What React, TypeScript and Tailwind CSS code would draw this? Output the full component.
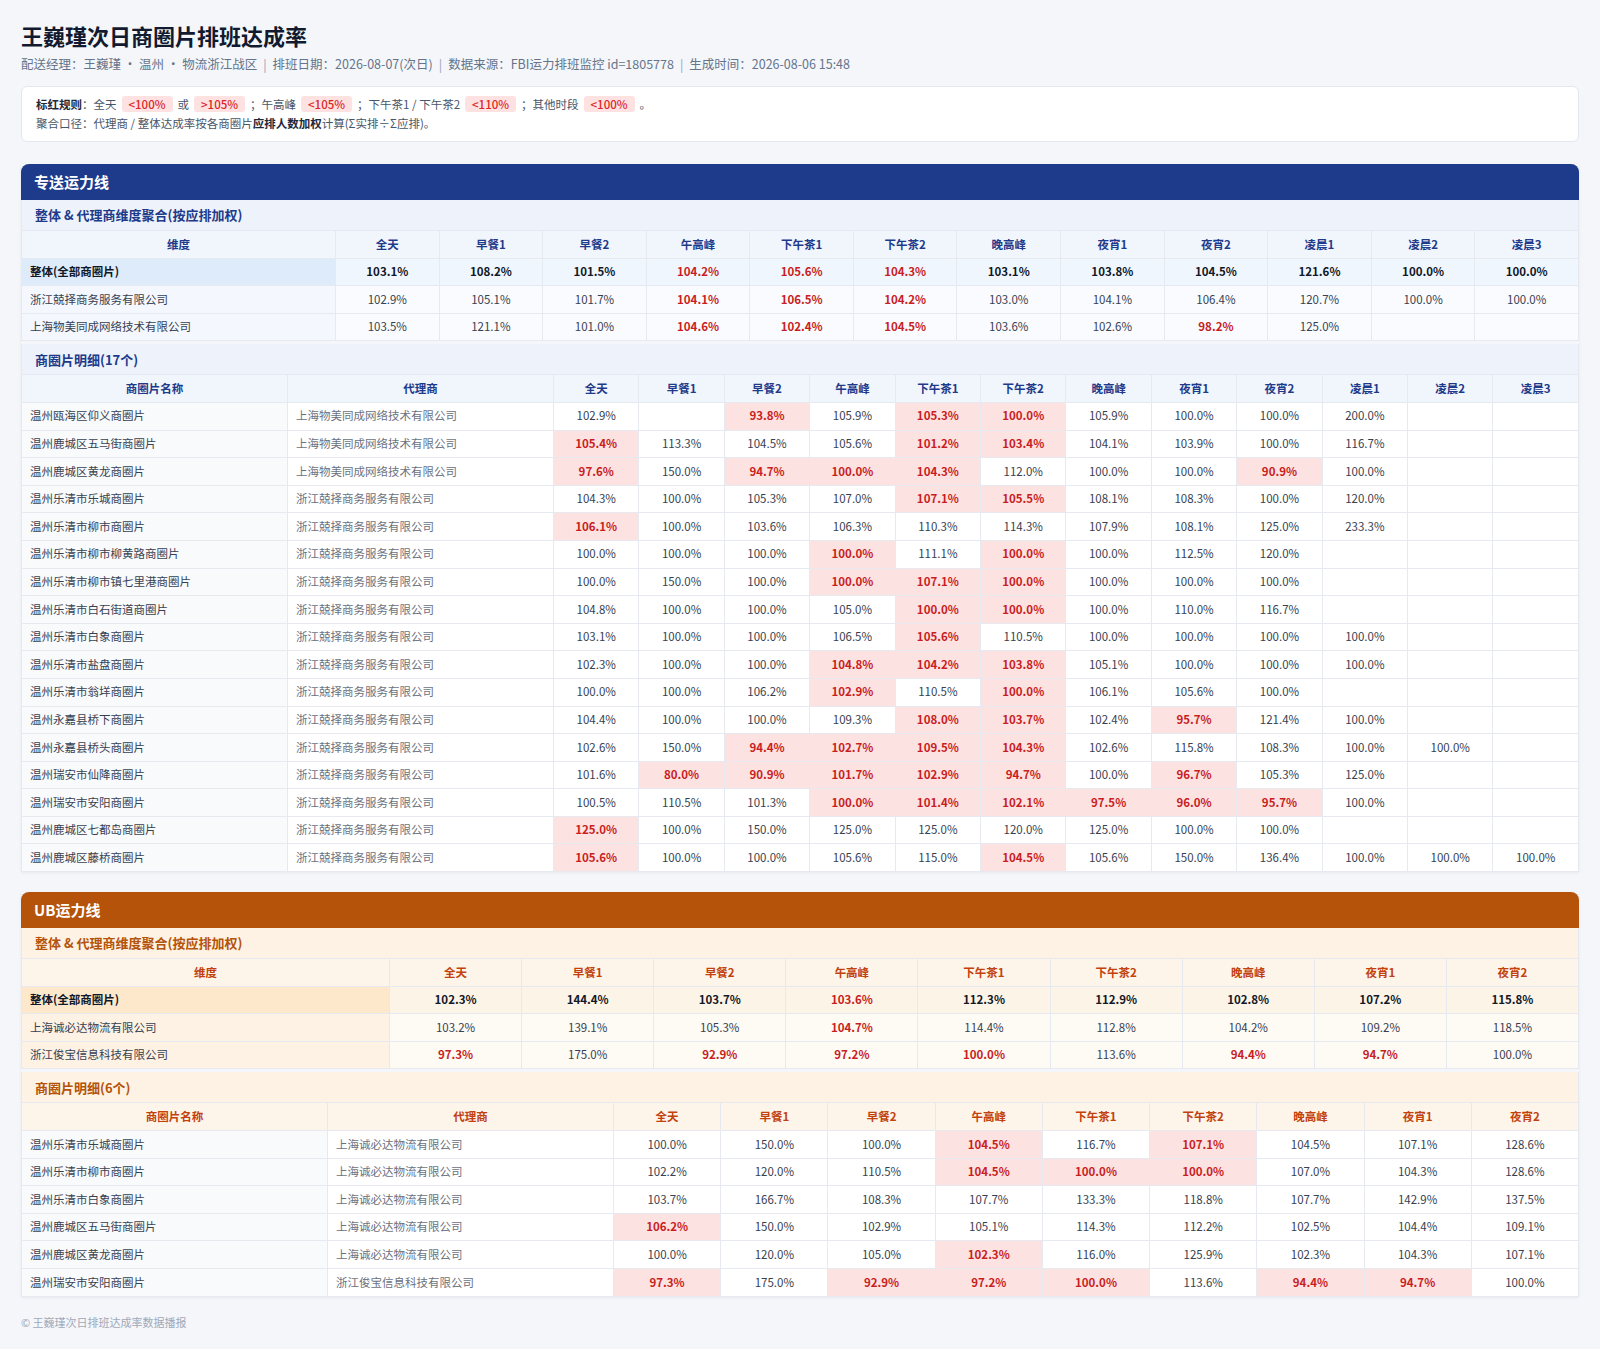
import { Fragment } from "react";

type Val = number | null;
const _ = null;

const ZS_SLOTS = ["全天", "早餐1", "早餐2", "午高峰", "下午茶1", "下午茶2", "晚高峰", "夜宵1", "夜宵2", "凌晨1", "凌晨2", "凌晨3"];
const UB_SLOTS = ZS_SLOTS.slice(0, 9);

// 标红规则
function isRed(slot: string, v: Val) {
  if (v == null) return false;
  if (slot === "全天") return v < 100 || v > 105;
  if (slot === "午高峰") return v < 105;
  if (slot === "下午茶1" || slot === "下午茶2") return v < 110;
  return v < 100;
}

const fmt = (v: Val) => (v == null ? "" : `${v.toFixed(1)}%`);

interface AggRow {
  name: string;
  values: Val[];
}
interface DetailRow {
  name: string;
  agent: string;
  values: Val[];
}

const ZS_AGG: AggRow[] = [
  { name: "整体(全部商圈片)", values: [103.1, 108.2, 101.5, 104.2, 105.6, 104.3, 103.1, 103.8, 104.5, 121.6, 100.0, 100.0] },
  { name: "浙江兢择商务服务有限公司", values: [102.9, 105.1, 101.7, 104.1, 106.5, 104.2, 103.0, 104.1, 106.4, 120.7, 100.0, 100.0] },
  { name: "上海物美同成网络技术有限公司", values: [103.5, 121.1, 101.0, 104.6, 102.4, 104.5, 103.6, 102.6, 98.2, 125.0, _, _] },
];

const WM = "上海物美同成网络技术有限公司";
const JZ = "浙江兢择商务服务有限公司";

const ZS_DETAIL: DetailRow[] = [
  { name: "温州瓯海区仰义商圈片", agent: WM, values: [102.9, _, 93.8, 105.9, 105.3, 100.0, 105.9, 100.0, 100.0, 200.0, _, _] },
  { name: "温州鹿城区五马街商圈片", agent: WM, values: [105.4, 113.3, 104.5, 105.6, 101.2, 103.4, 104.1, 103.9, 100.0, 116.7, _, _] },
  { name: "温州鹿城区黄龙商圈片", agent: WM, values: [97.6, 150.0, 94.7, 100.0, 104.3, 112.0, 100.0, 100.0, 90.9, 100.0, _, _] },
  { name: "温州乐清市乐城商圈片", agent: JZ, values: [104.3, 100.0, 105.3, 107.0, 107.1, 105.5, 108.1, 108.3, 100.0, 120.0, _, _] },
  { name: "温州乐清市柳市商圈片", agent: JZ, values: [106.1, 100.0, 103.6, 106.3, 110.3, 114.3, 107.9, 108.1, 125.0, 233.3, _, _] },
  { name: "温州乐清市柳市柳黄路商圈片", agent: JZ, values: [100.0, 100.0, 100.0, 100.0, 111.1, 100.0, 100.0, 112.5, 120.0, _, _, _] },
  { name: "温州乐清市柳市镇七里港商圈片", agent: JZ, values: [100.0, 150.0, 100.0, 100.0, 107.1, 100.0, 100.0, 100.0, 100.0, _, _, _] },
  { name: "温州乐清市白石街道商圈片", agent: JZ, values: [104.8, 100.0, 100.0, 105.0, 100.0, 100.0, 100.0, 110.0, 116.7, _, _, _] },
  { name: "温州乐清市白象商圈片", agent: JZ, values: [103.1, 100.0, 100.0, 106.5, 105.6, 110.5, 100.0, 100.0, 100.0, 100.0, _, _] },
  { name: "温州乐清市盐盘商圈片", agent: JZ, values: [102.3, 100.0, 100.0, 104.8, 104.2, 103.8, 105.1, 100.0, 100.0, 100.0, _, _] },
  { name: "温州乐清市翁垟商圈片", agent: JZ, values: [100.0, 100.0, 106.2, 102.9, 110.5, 100.0, 106.1, 105.6, 100.0, _, _, _] },
  { name: "温州永嘉县桥下商圈片", agent: JZ, values: [104.4, 100.0, 100.0, 109.3, 108.0, 103.7, 102.4, 95.7, 121.4, 100.0, _, _] },
  { name: "温州永嘉县桥头商圈片", agent: JZ, values: [102.6, 150.0, 94.4, 102.7, 109.5, 104.3, 102.6, 115.8, 108.3, 100.0, 100.0, _] },
  { name: "温州瑞安市仙降商圈片", agent: JZ, values: [101.6, 80.0, 90.9, 101.7, 102.9, 94.7, 100.0, 96.7, 105.3, 125.0, _, _] },
  { name: "温州瑞安市安阳商圈片", agent: JZ, values: [100.5, 110.5, 101.3, 100.0, 101.4, 102.1, 97.5, 96.0, 95.7, 100.0, _, _] },
  { name: "温州鹿城区七都岛商圈片", agent: JZ, values: [125.0, 100.0, 150.0, 125.0, 125.0, 120.0, 125.0, 100.0, 100.0, _, _, _] },
  { name: "温州鹿城区藤桥商圈片", agent: JZ, values: [105.6, 100.0, 100.0, 105.6, 115.0, 104.5, 105.6, 150.0, 136.4, 100.0, 100.0, 100.0] },
];

const UB_AGG: AggRow[] = [
  { name: "整体(全部商圈片)", values: [102.3, 144.4, 103.7, 103.6, 112.3, 112.9, 102.8, 107.2, 115.8] },
  { name: "上海诚必达物流有限公司", values: [103.2, 139.1, 105.3, 104.7, 114.4, 112.8, 104.2, 109.2, 118.5] },
  { name: "浙江俊宝信息科技有限公司", values: [97.3, 175.0, 92.9, 97.2, 100.0, 113.6, 94.4, 94.7, 100.0] },
];

const CBD = "上海诚必达物流有限公司";

const UB_DETAIL: DetailRow[] = [
  { name: "温州乐清市乐城商圈片", agent: CBD, values: [100.0, 150.0, 100.0, 104.5, 116.7, 107.1, 104.5, 107.1, 128.6] },
  { name: "温州乐清市柳市商圈片", agent: CBD, values: [102.2, 120.0, 110.5, 104.5, 100.0, 100.0, 107.0, 104.3, 128.6] },
  { name: "温州乐清市白象商圈片", agent: CBD, values: [103.7, 166.7, 108.3, 107.7, 133.3, 118.8, 107.7, 142.9, 137.5] },
  { name: "温州鹿城区五马街商圈片", agent: CBD, values: [106.2, 150.0, 102.9, 105.1, 114.3, 112.2, 102.5, 104.4, 109.1] },
  { name: "温州鹿城区黄龙商圈片", agent: CBD, values: [100.0, 120.0, 105.0, 102.3, 116.0, 125.9, 102.3, 104.3, 107.1] },
  { name: "温州瑞安市安阳商圈片", agent: "浙江俊宝信息科技有限公司", values: [97.3, 175.0, 92.9, 97.2, 100.0, 113.6, 94.4, 94.7, 100.0] },
];

interface Theme {
  bar: string;
  band: string;
  th: string;
  totalFirst: string;
  totalRow: string;
  rowFirst: string;
  row: string;
}

const BLUE: Theme = {
  bar: "bg-[#1e3a8a]",
  band: "bg-[#edf2fb] text-[#1e3a8a]",
  th: "bg-[#f1f5fc] text-[#1e3a8a]",
  totalFirst: "bg-[#deebfb]",
  totalRow: "bg-[#f0f6fe]",
  rowFirst: "bg-[#f4f7fd]",
  row: "bg-[#f9fbfe]",
};

const AMBER: Theme = {
  bar: "bg-[#b45309]",
  band: "bg-[#fdf2e3] text-[#b45309]",
  th: "bg-[#fdf5ea] text-[#c2410c]",
  totalFirst: "bg-[#fde8cc]",
  totalRow: "bg-[#fdf4e8]",
  rowFirst: "bg-[#fdf2e4]",
  row: "bg-[#fefaf4]",
};

const cell = "border border-[#e6e9f0] px-2 py-[5.5px] leading-[15.6px] text-[11.5px]";

function Band({ theme, children }: { theme: Theme; children: React.ReactNode }) {
  return (
    <div className={`flex h-[30px] items-center border-x border-[#e6e9f0] px-[13px] text-[13px] font-bold ${theme.band}`}>
      {children}
    </div>
  );
}

function AggTable({ theme, slots, rows, firstCol }: { theme: Theme; slots: string[]; rows: AggRow[]; firstCol: string }) {
  return (
    <table className="w-full table-fixed border-collapse">
      <colgroup>
        <col className={firstCol} />
        {slots.map((s) => (
          <col key={s} />
        ))}
      </colgroup>
      <thead>
        <tr>
          <th className={`${cell} font-bold ${theme.th}`}>维度</th>
          {slots.map((s) => (
            <th key={s} className={`${cell} font-bold ${theme.th}`}>
              {s}
            </th>
          ))}
        </tr>
      </thead>
      <tbody>
        {rows.map((r, i) => {
          const total = i === 0;
          return (
            <tr key={r.name} className={total ? theme.totalRow : theme.row}>
              <td className={`${cell} text-left ${total ? `font-bold text-[#111827] ${theme.totalFirst}` : `text-[#374151] ${theme.rowFirst}`}`}>
                {r.name}
              </td>
              {r.values.map((v, j) => (
                <td
                  key={j}
                  className={`${cell} text-center ${
                    isRed(slots[j], v) ? "font-bold text-[#c81e1e]" : total ? "font-bold text-[#111827]" : "text-[#374151]"
                  }`}
                >
                  {fmt(v)}
                </td>
              ))}
            </tr>
          );
        })}
      </tbody>
    </table>
  );
}

function DetailTable({
  theme,
  slots,
  rows,
  nameCol,
  agentCol,
}: {
  theme: Theme;
  slots: string[];
  rows: DetailRow[];
  nameCol: string;
  agentCol: string;
}) {
  return (
    <table className="w-full table-fixed border-collapse bg-white">
      <colgroup>
        <col className={nameCol} />
        <col className={agentCol} />
        {slots.map((s) => (
          <col key={s} />
        ))}
      </colgroup>
      <thead>
        <tr>
          <th className={`${cell} font-bold ${theme.th}`}>商圈片名称</th>
          <th className={`${cell} font-bold ${theme.th}`}>代理商</th>
          {slots.map((s) => (
            <th key={s} className={`${cell} font-bold ${theme.th}`}>
              {s}
            </th>
          ))}
        </tr>
      </thead>
      <tbody>
        {rows.map((r) => (
          <tr key={r.name}>
            <td className={`${cell} bg-[#f9fafc] text-left text-[#374151]`}>{r.name}</td>
            <td className={`${cell} text-left text-[#6b7280]`}>{r.agent}</td>
            {r.values.map((v, j) => {
              const red = isRed(slots[j], v);
              return (
                <td
                  key={j}
                  className={`${cell} text-center ${red ? "bg-[#fde2e2] font-bold text-[#c81e1e]" : "text-[#374151]"}`}
                >
                  {fmt(v)}
                </td>
              );
            })}
          </tr>
        ))}
      </tbody>
    </table>
  );
}

function LineSection({
  title,
  theme,
  slots,
  agg,
  detail,
  aggFirst,
  nameCol,
  agentCol,
}: {
  title: string;
  theme: Theme;
  slots: string[];
  agg: AggRow[];
  detail: DetailRow[];
  aggFirst: string;
  nameCol: string;
  agentCol: string;
}) {
  return (
    <section className="shadow-[0_1px_3px_rgba(15,23,42,0.06)]">
      {/* Section header */}
      <div className={`flex h-9 items-center rounded-t-lg px-[13px] text-[15px] font-bold text-white ${theme.bar}`}>{title}</div>

      {/* Aggregate block */}
      <Band theme={theme}>整体 &amp; 代理商维度聚合(按应排加权)</Band>
      <AggTable theme={theme} slots={slots} rows={agg} firstCol={aggFirst} />

      {/* Detail block */}
      <div className="mt-[3px]">
        <Band theme={theme}>商圈片明细({detail.length}个)</Band>
        <DetailTable theme={theme} slots={slots} rows={detail} nameCol={nameCol} agentCol={agentCol} />
      </div>
    </section>
  );
}

function Pill({ children }: { children: React.ReactNode }) {
  return (
    <span className="mx-[5px] inline-block rounded-[3px] bg-[#fee2e2] px-[7px] leading-[16px] font-medium text-[#dc2626]">
      {children}
    </span>
  );
}

const META = [
  "配送经理：王巍瑾 · 温州 · 物流浙江战区",
  "排班日期：2026-08-07(次日)",
  "数据来源：FBI运力排班监控 id=1805778",
  "生成时间：2026-08-06 15:48",
];

export default function App() {
  return (
    <div className="min-h-screen bg-[#f4f6fa] px-[21px] pt-[19px] pb-5 font-['Noto_Sans_CJK_SC','Noto_Sans',sans-serif] text-[#374151]">
      {/* Title */}
      <h1 className="text-[22px] leading-[32px] font-bold text-[#111a2e]">王巍瑾次日商圈片排班达成率</h1>
      <div className="mt-[4px] text-[12.5px] leading-[18px] text-[#64748b]">
        {META.map((m, i) => (
          <Fragment key={m}>
            {i > 0 && <span className="mx-[6px] text-[#94a3b8]">|</span>}
            {m}
          </Fragment>
        ))}
      </div>

      {/* Rules */}
      <div className="mt-[13px] rounded-md border border-[#e2e8f0] bg-white px-[14px] py-[8px] text-[11.5px] leading-[19px] text-[#475569]">
        <div>
          <span className="font-bold text-[#1e293b]">标红规则</span>：全天<Pill>&lt;100%</Pill>或<Pill>&gt;105%</Pill>；午高峰
          <Pill>&lt;105%</Pill>；下午茶1 / 下午茶2<Pill>&lt;110%</Pill>；其他时段<Pill>&lt;100%</Pill>。
        </div>
        <div>
          聚合口径：代理商 / 整体达成率按各商圈片<span className="font-bold text-[#1e293b]">应排人数加权</span>计算(Σ实排÷Σ应排)。
        </div>
      </div>

      <div className="mt-[22px] flex flex-col gap-5">
        <LineSection
          title="专送运力线"
          theme={BLUE}
          slots={ZS_SLOTS}
          agg={ZS_AGG}
          detail={ZS_DETAIL}
          aggFirst="w-[314px]"
          nameCol="w-[266px]"
          agentCol="w-[266px]"
        />
        <LineSection
          title="UB运力线"
          theme={AMBER}
          slots={UB_SLOTS}
          agg={UB_AGG}
          detail={UB_DETAIL}
          aggFirst="w-[368px]"
          nameCol="w-[306px]"
          agentCol="w-[286px]"
        />
      </div>

      {/* Footer */}
      <div className="mt-[17px] text-[11px] leading-[16px] text-[#a0a8b8]">© 王巍瑾次日排班达成率数据播报</div>
    </div>
  );
}
